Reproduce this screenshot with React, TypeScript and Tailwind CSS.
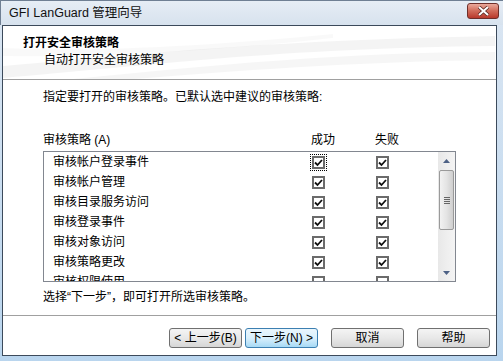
import React from "react";

const FONT = { fontFamily: '"Liberation Sans", "Noto Sans CJK SC", sans-serif' };

type Policy = { name: string; success: boolean; failure: boolean };

const policies: Policy[] = [
  { name: "审核帐户登录事件", success: true, failure: true },
  { name: "审核帐户管理", success: true, failure: true },
  { name: "审核目录服务访问", success: true, failure: true },
  { name: "审核登录事件", success: true, failure: true },
  { name: "审核对象访问", success: true, failure: true },
  { name: "审核策略更改", success: true, failure: true },
  { name: "审核权限使用", success: false, failure: false },
];

const CheckBox = ({ checked, focused }: { checked: boolean; focused?: boolean }) => (
  <div
    className={
      "flex items-center justify-center w-[15px] h-[15px] " +
      (focused ? "outline outline-1 outline-dotted outline-black" : "")
    }
  >
    <div className="w-[13px] h-[13px] border-2 border-[#6b6b6b] bg-white flex items-center justify-center">
      {checked && (
        <svg width="9" height="9" viewBox="0 0 9 9">
          <path d="M1 4.5 L3.5 7 L8 2" stroke="#111" strokeWidth="1.8" fill="none" />
        </svg>
      )}
    </div>
  </div>
);

const Button = ({ label, primary }: { label: string; primary?: boolean }) => (
  <button
    className={
      "h-[20px] w-[73px] rounded-[3px] border text-[12px] leading-none text-black " +
      (primary
        ? "border-[#3c7fb1] bg-gradient-to-b from-[#eaf6fd] via-[#d9f0fc] to-[#a7d9f5]"
        : "border-[#707070] bg-gradient-to-b from-[#f4f4f4] via-[#e8e8e8] to-[#d6d6d6]")
    }
  >
    {label}
  </button>
);

const ScrollBar = () => (
  <div className="w-[17px] h-full flex flex-col bg-gradient-to-r from-[#e8e8e8] to-[#f4f4f4]">
    <div className="h-[17px] flex items-center justify-center">
      <svg width="7" height="4" viewBox="0 0 7 4">
        <path d="M0 4 L3.5 0 L7 4 Z" fill="#4d6185" />
      </svg>
    </div>
    <div className="mt-[1px] h-[60px] mx-[1px] rounded-[2px] border border-[#9a9a9a] bg-gradient-to-r from-[#f2f2f2] via-[#e4e4e4] to-[#cfcfcf] flex items-center justify-center">
      <div className="flex flex-col gap-[1px]">
        <div className="w-[6px] h-[1px] bg-[#666]" />
        <div className="w-[6px] h-[1px] bg-[#666]" />
        <div className="w-[6px] h-[1px] bg-[#666]" />
        <div className="w-[6px] h-[1px] bg-[#666]" />
      </div>
    </div>
    <div className="flex-1" />
    <div className="h-[17px] flex items-center justify-center">
      <svg width="7" height="4" viewBox="0 0 7 4">
        <path d="M0 0 L7 0 L3.5 4 Z" fill="#4d6185" />
      </svg>
    </div>
  </div>
);

export default function App() {
  return (
    <div
      className="w-[503px] h-[361px] flex flex-col bg-gradient-to-b from-[#dbe6f2] to-[#b9d5ee] overflow-hidden"
      style={FONT}
    >
      {/* title bar */}
      <div className="h-[25px] flex items-center pl-[8px] pr-[4px] bg-gradient-to-b from-[#e6edf5] to-[#d7e2ee] border-t border-l border-[#6f7f93]">
        <div className="text-[12.5px] text-[#111] flex-1">GFI LanGuard 管理向导</div>
        <div className="w-[32px] h-[16px] mt-[-4px] rounded-[3px] border border-[#6e2f2a] bg-gradient-to-b from-[#e9a99b] via-[#d06a59] to-[#b8382b] flex items-center justify-center">
          <svg width="13" height="10" viewBox="0 0 13 10">
            <path d="M2 1 L11 9 M11 1 L2 9" stroke="#5a2a24" strokeWidth="3.6" />
            <path d="M2 1 L11 9 M11 1 L2 9" stroke="#ffffff" strokeWidth="2" />
          </svg>
        </div>
      </div>

      {/* client area */}
      <div className="flex-1 ml-[2px] mr-[6px] mb-[5px] border border-[#3c4a5b] bg-white flex flex-col">
        {/* header */}
        <div className="relative h-[54px] border-b border-[#a0a0a0] bg-white overflow-hidden">
          <svg className="absolute inset-0" width="492" height="54" viewBox="0 0 492 54">
            <path d="M0 40 C120 30 260 14 492 10 L492 20 C280 22 140 40 0 52 Z" fill="#000" opacity="0.045" />
            <path d="M60 54 C200 40 340 26 492 26 L492 34 C340 36 220 46 120 54 Z" fill="#000" opacity="0.035" />
            <path d="M0 22 C100 26 200 20 330 8 L330 12 C220 24 100 32 0 30 Z" fill="#000" opacity="0.025" />
          </svg>
          <div className="relative pl-[20px] pt-[9px] text-[12px] leading-[16px] font-bold text-black">
            打开安全审核策略
          </div>
          <div className="relative pl-[41px] pt-[1px] text-[12px] leading-[16px] text-black">
            自动打开安全审核策略
          </div>
        </div>

        {/* body */}
        <div className="flex-1 flex flex-col pl-[40px] text-[12px] leading-[16px] text-black">
          <div className="pt-[9px]">指定要打开的审核策略。已默认选中建议的审核策略:</div>

          <div className="mt-[27px] flex items-center h-[16px]">
            <div className="w-[268px]">审核策略 (A)</div>
            <div className="w-[64px]">成功</div>
            <div>失败</div>
          </div>

          <div className="mt-[3px] w-[413px] h-[131px] border border-[#828790] flex">
            <div className="flex-1 overflow-hidden">
              {policies.map((p, i) => (
                <div key={p.name} className="h-[20px] flex items-center">
                  <div className="w-[267px] pl-[9px]">{p.name}</div>
                  <div className="w-[64px]">
                    <CheckBox checked={p.success} focused={i === 0} />
                  </div>
                  <CheckBox checked={p.failure} />
                </div>
              ))}
            </div>
            <ScrollBar />
          </div>

          <div className="pt-[7px]">选择“下一步”，即可打开所选审核策略。</div>
        </div>

        {/* footer */}
        <div className="h-[40px] border-t border-[#a0a0a0] flex items-start justify-end pr-[6px] pt-[12px]">
          <div className="flex">
            <Button label="< 上一步(B)" />
            <div className="w-[3px]" />
            <Button label="下一步(N) >" primary />
            <div className="w-[13px]" />
            <Button label="取消" />
            <div className="w-[13px]" />
            <Button label="帮助" />
          </div>
        </div>
      </div>
    </div>
  );
}
